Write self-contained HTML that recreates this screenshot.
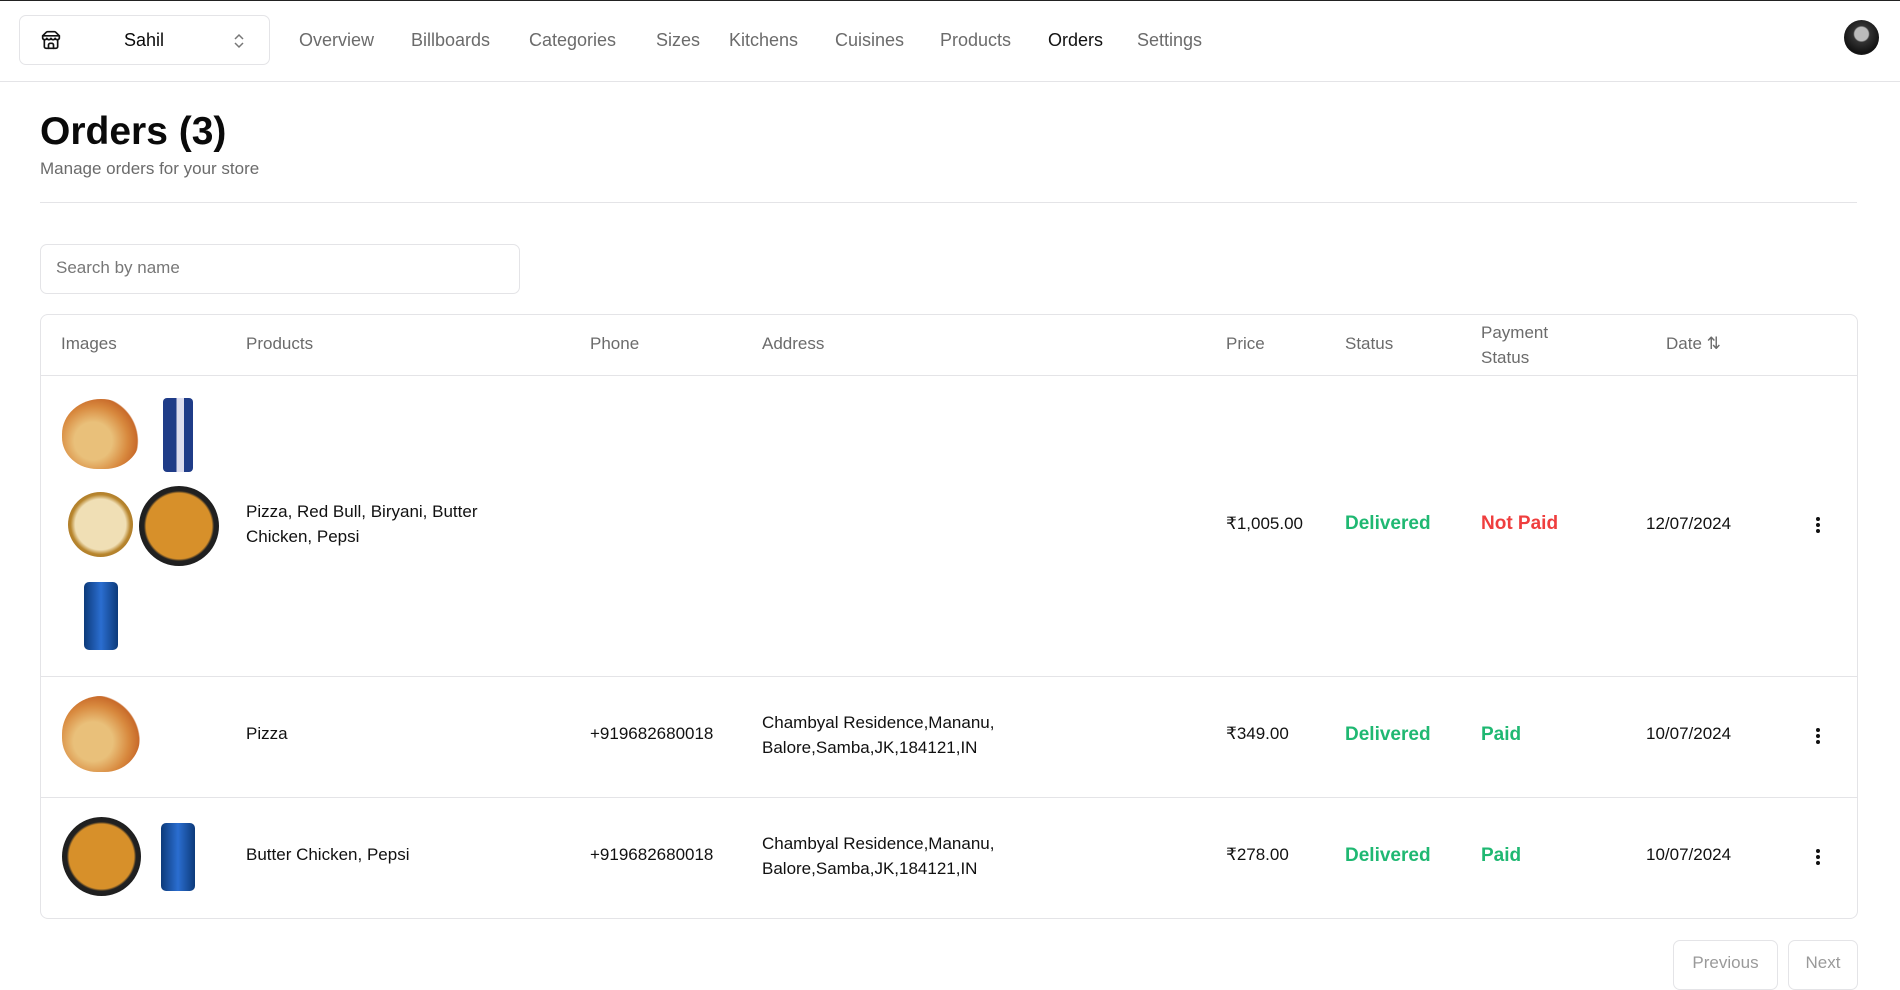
<!DOCTYPE html>
<html><head><meta charset="utf-8"><style>
*{box-sizing:border-box;margin:0;padding:0}
body{width:1900px;height:975px;overflow:hidden;background:#fff;font-family:"Liberation Sans",sans-serif;color:#0a0a0a;position:relative;border-top:1px solid #222}
.a{position:absolute;white-space:nowrap}
.nav{font-size:18px;color:#6b6b6b;top:29px}
.h{font-size:17px;color:#6b6b6b}
.t{font-size:17px;color:#111}
.st{font-size:19px;font-weight:bold}
.g{color:#1fb872}.r{color:#ef3e3e}
.line{position:absolute;height:1px;background:#e4e4e7}
.dots{position:absolute;width:4px}
.dots i{display:block;width:4px;height:4px;border-radius:50%;background:#111;margin-bottom:2px}
.btn{position:absolute;border:1px solid #e4e4e7;border-radius:7px;color:#9a9a9a;font-size:17px;text-align:center;padding-top:12px}
</style></head><body>
<div class="a" style="left:19px;top:14px;width:251px;height:50px;border:1px solid #e4e4e7;border-radius:7px"></div>
<svg class="a" style="left:41px;top:29px" width="20" height="20" viewBox="0 0 24 24" fill="none" stroke="#111" stroke-width="2" stroke-linecap="round" stroke-linejoin="round"><path d="M2 7l4.4-4.4A2 2 0 0 1 7.8 2h8.4a2 2 0 0 1 1.4.6L22 7"/><path d="M4 12v8a2 2 0 0 0 2 2h12a2 2 0 0 0 2-2v-8"/><path d="M15 22v-4a2 2 0 0 0-2-2h-2a2 2 0 0 0-2 2v4"/><path d="M2 7h20v3a2.7 2.7 0 0 1-5 0 2.7 2.7 0 0 1-5 0 2.7 2.7 0 0 1-5 0 2.7 2.7 0 0 1-5 0z"/></svg>
<div class="a" style="left:124px;top:29px;font-size:18px">Sahil</div>
<svg class="a" style="left:231px;top:31px" width="16" height="18" viewBox="0 0 16 18" fill="none" stroke="#777" stroke-width="1.5"><path d="M4 7l4-4 4 4M4 11l4 4 4-4"/></svg>
<div class="a nav" style="left:299px">Overview</div>
<div class="a nav" style="left:411px">Billboards</div>
<div class="a nav" style="left:529px">Categories</div>
<div class="a nav" style="left:656px">Sizes</div>
<div class="a nav" style="left:729px">Kitchens</div>
<div class="a nav" style="left:835px">Cuisines</div>
<div class="a nav" style="left:940px">Products</div>
<div class="a nav" style="left:1048px;color:#111">Orders</div>
<div class="a nav" style="left:1137px">Settings</div>
<div class="a" style="left:1844px;top:19px;width:35px;height:35px;border-radius:50%;background:radial-gradient(circle at 50% 40%,#bbb 0 25%,#333 30%,#111 70%,#555)"></div>
<div class="line" style="left:0;top:80px;width:1900px"></div>
<div class="a" style="left:40px;top:109px;font-size:39px;font-weight:bold">Orders (3)</div>
<div class="a" style="left:40px;top:158px;font-size:17px;color:#6b6b6b">Manage orders for your store</div>
<div class="line" style="left:40px;top:201px;width:1817px"></div>
<div class="a" style="left:40px;top:243px;width:480px;height:50px;border:1px solid #e4e4e7;border-radius:7px"></div>
<div class="a" style="left:56px;top:257px;font-size:17px;color:#777">Search by name</div>
<div class="a" style="left:40px;top:313px;width:1818px;height:605px;border:1px solid #e4e4e7;border-radius:8px"></div>
<div class="a h" style="left:61px;top:333px">Images</div>
<div class="a h" style="left:246px;top:333px">Products</div>
<div class="a h" style="left:590px;top:333px">Phone</div>
<div class="a h" style="left:762px;top:333px">Address</div>
<div class="a h" style="left:1226px;top:333px">Price</div>
<div class="a h" style="left:1345px;top:333px">Status</div>
<div class="a h" style="left:1481px;top:319px;line-height:25px">Payment<br>Status</div>
<div class="a h" style="left:1666px;top:333px">Date ⇅</div>
<div class="line" style="left:41px;top:374px;width:1816px"></div>
<div class="line" style="left:41px;top:675px;width:1816px"></div>
<div class="line" style="left:41px;top:796px;width:1816px"></div>
<div class="a" style="left:62px;top:398px;width:78px;height:70px;border-radius:50% 50% 45% 45%;background:radial-gradient(circle at 40% 60%,#e9c07a 0 30%,#d8893e 55%,#c86a2a 70%,transparent 72%)"></div>
<div class="a" style="left:163px;top:397px;width:30px;height:74px;border-radius:4px;background:linear-gradient(90deg,#1f3c88 0 45%,#dde 45% 70%,#1f3c88 70%)"></div>
<div class="a" style="left:68px;top:491px;width:65px;height:65px;border-radius:50%;background:radial-gradient(circle,#f0dfb5 0 55%,#b8862e 65%,#8a5a1a)"></div>
<div class="a" style="left:139px;top:485px;width:80px;height:80px;border-radius:50%;background:radial-gradient(circle,#d7902a 0 58%,#222 62%,#111)"></div>
<div class="a" style="left:84px;top:581px;width:34px;height:68px;border-radius:5px;background:linear-gradient(90deg,#0c3a7a,#2b6ed0,#0c3a7a)"></div>
<div class="a t" style="left:246px;top:498px;line-height:25px">Pizza, Red Bull, Biryani, Butter<br>Chicken, Pepsi</div>
<div class="a t" style="left:1226px;top:513px">₹1,005.00</div>
<div class="a st g" style="left:1345px;top:512px">Delivered</div>
<div class="a st r" style="left:1481px;top:512px">Not Paid</div>
<div class="a t" style="left:1646px;top:513px">12/07/2024</div>
<div class="dots" style="left:1816px;top:516px"><i></i><i></i><i></i></div>
<div class="a" style="left:62px;top:695px;width:78px;height:76px;border-radius:50% 50% 45% 45%;background:radial-gradient(circle at 40% 60%,#e9c07a 0 30%,#d8893e 55%,#c86a2a 70%,transparent 72%)"></div>
<div class="a t" style="left:246px;top:723px">Pizza</div>
<div class="a t" style="left:590px;top:723px">+919682680018</div>
<div class="a t" style="left:762px;top:709px;line-height:25px">Chambyal Residence,Mananu,<br>Balore,Samba,JK,184121,IN</div>
<div class="a t" style="left:1226px;top:723px">₹349.00</div>
<div class="a st g" style="left:1345px;top:723px">Delivered</div>
<div class="a st g" style="left:1481px;top:723px">Paid</div>
<div class="a t" style="left:1646px;top:723px">10/07/2024</div>
<div class="dots" style="left:1816px;top:727px"><i></i><i></i><i></i></div>
<div class="a" style="left:62px;top:816px;width:79px;height:79px;border-radius:50%;background:radial-gradient(circle,#d7902a 0 58%,#222 62%,#111)"></div>
<div class="a" style="left:161px;top:822px;width:34px;height:68px;border-radius:5px;background:linear-gradient(90deg,#0c3a7a,#2b6ed0,#0c3a7a)"></div>
<div class="a t" style="left:246px;top:844px">Butter Chicken, Pepsi</div>
<div class="a t" style="left:590px;top:844px">+919682680018</div>
<div class="a t" style="left:762px;top:830px;line-height:25px">Chambyal Residence,Mananu,<br>Balore,Samba,JK,184121,IN</div>
<div class="a t" style="left:1226px;top:844px">₹278.00</div>
<div class="a st g" style="left:1345px;top:844px">Delivered</div>
<div class="a st g" style="left:1481px;top:844px">Paid</div>
<div class="a t" style="left:1646px;top:844px">10/07/2024</div>
<div class="dots" style="left:1816px;top:848px"><i></i><i></i><i></i></div>
<div class="btn" style="left:1673px;top:939px;width:105px;height:50px">Previous</div>
<div class="btn" style="left:1788px;top:939px;width:70px;height:50px">Next</div>
</body></html>
